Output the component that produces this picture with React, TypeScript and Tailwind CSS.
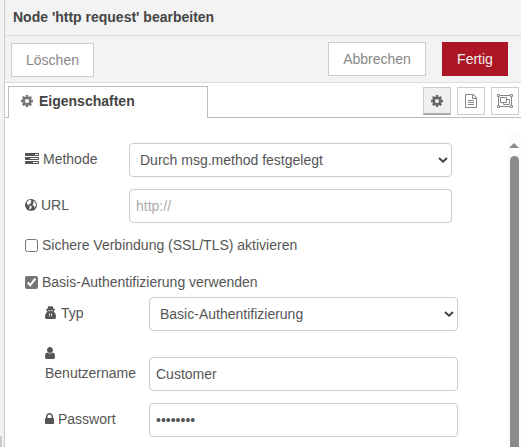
import React from "react";

const paths = {
  cog: "M1152 896q0-106-75-181t-181-75-181 75-75 181 75 181 181 75 181-75 75-181zm512-109v222q0 12-8 23t-20 13l-185 28q-19 54-39 91 35 50 107 138 10 12 10 25t-9 23q-27 37-99 108t-94 71q-12 0-26-9l-138-108q-44 23-91 38-16 136-29 186-7 28-36 28h-222q-14 0-24.5-8.5t-11.5-21.5l-28-184q-49-16-90-37l-141 107q-10 9-25 9-14 0-25-11-126-114-165-168-7-10-7-23 0-12 8-23 15-21 51-66.5t54-70.5q-27-50-41-99l-183-27q-13-2-21-12.5t-8-23.5v-222q0-12 8-23t19-13l186-28q14-46 39-92-40-57-107-138-10-12-10-24 0-10 9-23 26-36 98.5-107.5t94.5-71.5q13 0 26 10l138 107q44-23 91-38 16-136 29-186 7-28 36-28h222q14 0 24.5 8.5t11.5 21.5l28 184q49 16 90 37l142-107q9-9 24-9 13 0 25 10 129 119 165 170 7 8 7 22 0 12-8 23-15 21-51 66.5t-54 70.5q26 50 41 98l183 28q13 2 21 12.5t8 23.5z",
  tasks: "M1024 1408h640v-128h-640v128zm-384-512h1024v-128h-1024v128zm640-512h384v-128h-384v128zm512 832v256q0 26-19 45t-45 19h-1664q-26 0-45-19t-19-45v-256q0-26 19-45t45-19h1664q26 0 45 19t19 45zm0-512v256q0 26-19 45t-45 19h-1664q-26 0-45-19t-19-45v-256q0-26 19-45t45-19h1664q26 0 45 19t19 45zm0-512v256q0 26-19 45t-45 19h-1664q-26 0-45-19t-19-45v-256q0-26 19-45t45-19h1664q26 0 45 19t19 45z",
  user: "M1536 1399q0 109-62.5 187t-150.5 78h-854q-88 0-150.5-78t-62.5-187q0-85 8.5-160.5t31.5-152 58.5-131 94-89 134.5-34.5q131 128 313 128t313-128q76 0 134.5 34.5t94 89 58.5 131 31.5 152 8.5 160.5zm-256-887q0 159-112.5 271.5t-271.5 112.5-271.5-112.5-112.5-271.5 112.5-271.5 271.5-112.5 271.5 112.5 112.5 271.5z",
  lock: "M640 768h512v-192q0-106-75-181t-181-75-181 75-75 181v192zm832 96v576q0 40-28 68t-68 28h-960q-40 0-68-28t-28-68v-576q0-40 28-68t68-28h32v-192q0-184 132-316t316-132 316 132 132 316v192h32q40 0 68 28t28 68z",
  file: "M1596 380q28 28 48 76t20 88v1152q0 40-28 68t-68 28h-1344q-40 0-68-28t-28-68v-1600q0-40 28-68t68-28h896q40 0 88 20t76 48zm-444-244v376h376q-10-29-22-41l-313-313q-12-12-41-22zm384 1528v-1024h-416q-40 0-68-28t-28-68v-416h-768v1536h1280zm-1024-864q0-14 9-23t23-9h704q14 0 23 9t9 23v64q0 14-9 23t-23 9h-704q-14 0-23-9t-9-23v-64zm736 224q14 0 23 9t9 23v64q0 14-9 23t-23 9h-704q-14 0-23-9t-9-23v-64q0-14 9-23t23-9h704zm0 256q14 0 23 9t9 23v64q0 14-9 23t-23 9h-704q-14 0-23-9t-9-23v-64q0-14 9-23t23-9h704z",
};

function Icon({ name, box, className }: { name: keyof typeof paths; box: string; className: string }) {
  return (
    <svg viewBox={box} fill="currentColor" className={`shrink-0 ${className}`}>
      <path d={paths[name]} />
    </svg>
  );
}

function Globe() {
  return (
    <svg viewBox="0 0 12 12" className="h-3 w-3 shrink-0">
      <circle cx="6" cy="6" r="6" fill="currentColor" />
      <path fill="#fff" d="M4.6 1.1 6.6 1.2 5.6 2.3 6.6 3 5.4 4.4 4 5.4 4.4 6.6 3.4 6.2 2 4.6 1.5 3.7 2.7 2ZM5 6.7 6.9 7.6 6.3 9 5 11 4.3 9.2ZM8.1 2.2 9.7 2.6 10.8 4.6 11 6.2 10 8.2 9.3 8.5 9 7 7.8 6.4 7.7 5 8.8 4.1Z" />
    </svg>
  );
}

function Agent() {
  return (
    <svg viewBox="0 0 11 13" className="mb-px h-[13px] w-[11px] shrink-0">
      <path fill="currentColor" d="M3.5 0 5.5.6 7.5 0Q8.1 1 8.4 2.7L10 3.3V4.1L8.9 4.5V6.1L10 7Q11 8.5 11 11 11 13 9.4 13H1.6Q0 13 0 11 0 8.5 1 7L2.1 6.1V4.5L1 4.1V3.3L2.6 2.7Q2.9 1 3.5 0Z" />
      <path fill="#fff" d="M3 4.4h5v.5l-1 .4-1.5-.2-1.5.2-1-.4ZM3.7 7.3 5 8 4.7 11.3ZM7.3 7.3 6 8 6.3 11.3Z" />
    </svg>
  );
}

function ObjectGroup() {
  return (
    <svg viewBox="0 0 16 14" className="h-[14px] w-4" fill="none" stroke="currentColor" strokeWidth="1">
      <path d="M3 1.5H13M3 12.5H13M1.5 3V11M14.5 3V11" />
      <path d="M.5.5h2v2h-2ZM13.5.5h2v2h-2ZM.5 11.5h2v2h-2ZM13.5 11.5h2v2h-2Z" />
      <path d="M3.5 3.5h6v5h-6ZM9.5 5.5h3v5h-6v-2" />
    </svg>
  );
}

const field = "h-[34px] rounded-[4px] border border-[#ccc] bg-white text-sm text-[#555] outline-none";

function Select({ text, className }: { text: string; className: string }) {
  return (
    <div className={`flex items-center justify-between pl-[10px] pr-[3px] ${field} ${className}`}>
      <span>{text}</span>
      <svg viewBox="0 0 10 6" className="h-[6px] w-[10px]" fill="none" stroke="#444" strokeWidth="2">
        <path d="M1 1 5 4.7 9 1" />
      </svg>
    </div>
  );
}

export default function App() {
  return (
    <div className="flex h-[447px] w-[521px] overflow-hidden bg-white font-['Liberation_Sans',Arial,sans-serif] text-sm leading-5 text-[#555]">
      <div className="flex w-[5px] shrink-0 flex-col justify-end border-r border-[#ccc] bg-[#f2f2f2]">
        <div className="h-[11px] w-[2px] bg-[#ccc]" />
      </div>
      <div className="flex min-w-0 flex-1 flex-col">
        <header className="flex h-9 shrink-0 items-center border-b border-[#ddd] bg-[#f3f3f3] pb-px pl-2 font-bold text-[#444]">
          Node 'http request' bearbeiten
        </header>
        <div className="flex h-[47px] shrink-0 items-start border-b border-[#ddd] bg-[#f3f3f3] pl-[6px] pr-[13px] pt-[6px]">
          <button className="mt-px h-[34px] w-[83px] border border-[#ccc] bg-white text-[#888]">Löschen</button>
          <button className="ml-auto h-[34px] w-[98px] border border-[#ccc] bg-white text-[#888]">Abbrechen</button>
          <button className="ml-4 h-[34px] w-[66px] bg-[#ad1625] text-[#eee]">Fertig</button>
        </div>
        <div className="flex h-[35px] shrink-0 items-end">
          <div className="w-[3px] border-b border-[#bbb]" />
          <div className="flex h-8 w-[200px] items-center border-x border-t border-[#bbb] pb-[3px] pl-3 font-bold text-[#444]">
            <Icon name="cog" box="128 128 1536 1536" className="mr-[6px] h-3 w-3 text-[#777]" />
            Eigenschaften
          </div>
          <div className="flex h-8 flex-1 items-start justify-end gap-[6px] border-b border-[#bbb] pr-[2px] pt-px text-[#888]">
            <button className="flex h-7 w-7 items-center justify-center border border-b-2 border-[#ccc] border-b-[#aaa] bg-[#efefef] text-[#666]">
              <Icon name="cog" box="128 128 1536 1536" className="h-3 w-3" />
            </button>
            <button className="flex h-7 w-7 items-center justify-center border border-[#ccc]">
              <Icon name="file" box="128 0 1536 1792" className="h-[14px] w-3" />
            </button>
            <button className="flex h-7 w-7 items-center justify-center border border-[#ccc]">
              <ObjectGroup />
            </button>
          </div>
        </div>
        <main className="flex min-h-0 flex-1">
          <div className="flex-1 pl-5 pt-[25px]">
            <div className="flex h-[46px]">
              <label className="flex h-8 w-[104px] items-center gap-1"><Icon name="tasks" box="0 128 1792 1408" className="mb-px h-[11px] w-[14px]" />Methode</label>
              <Select text="Durch msg.method festgelegt" className="w-[323px]" />
            </div>
            <div className="flex h-[46px]">
              <label className="flex h-8 w-[104px] items-center gap-1"><Globe />URL</label>
              <input placeholder="http://" className={`w-[323px] px-[6px] placeholder:text-[#aaa] ${field}`} />
            </div>
            <label className="flex h-[37px] items-start gap-1">
              <input type="checkbox" className="mt-1 h-[13px] w-[13px]" />Sichere Verbindung (SSL/TLS) aktivieren
            </label>
            <label className="flex h-[25px] items-start gap-1">
              <input type="checkbox" defaultChecked className="mt-1 h-[13px] w-[13px] accent-[#757575]" />Basis-Authentifizierung verwenden
            </label>
            <div className="pl-5">
              <div className="flex h-[46px]">
                <label className="flex h-8 w-[104px] items-center gap-[5px]"><Agent />Typ</label>
                <Select text="Basic-Authentifizierung" className="w-[309px]" />
              </div>
              <div className="flex h-[60px]">
                <label className="w-[104px] pt-1"><Icon name="user" box="256 128 1280 1536" className="h-3 w-[10px]" /><span className="mt-1 block">Benutzername</span></label>
                <input defaultValue="Customer" className={`mt-[14px] w-[309px] px-[6px] ${field}`} />
              </div>
              <div className="flex h-[34px]">
                <label className="flex h-8 w-[104px] items-center gap-1"><Icon name="lock" box="320 128 1152 1408" className="mb-px h-[11px] w-[9px]" />Passwort</label>
                <input type="password" defaultValue="12345678" className={`w-[309px] px-[6px] ${field}`} />
              </div>
            </div>
          </div>
          <div className="mt-[15px] flex w-[14px] flex-col items-center bg-[#fcfcfc] pt-[10px]">
            <svg viewBox="0 0 10 5" className="h-[5px] w-[10px]" fill="#8b8b8b"><path d="M5 0 10 5H0Z" /></svg>
            <div className="mt-2 w-[9px] flex-1 rounded-t-full bg-[#8b8b8b]" />
          </div>
        </main>
      </div>
    </div>
  );
}
